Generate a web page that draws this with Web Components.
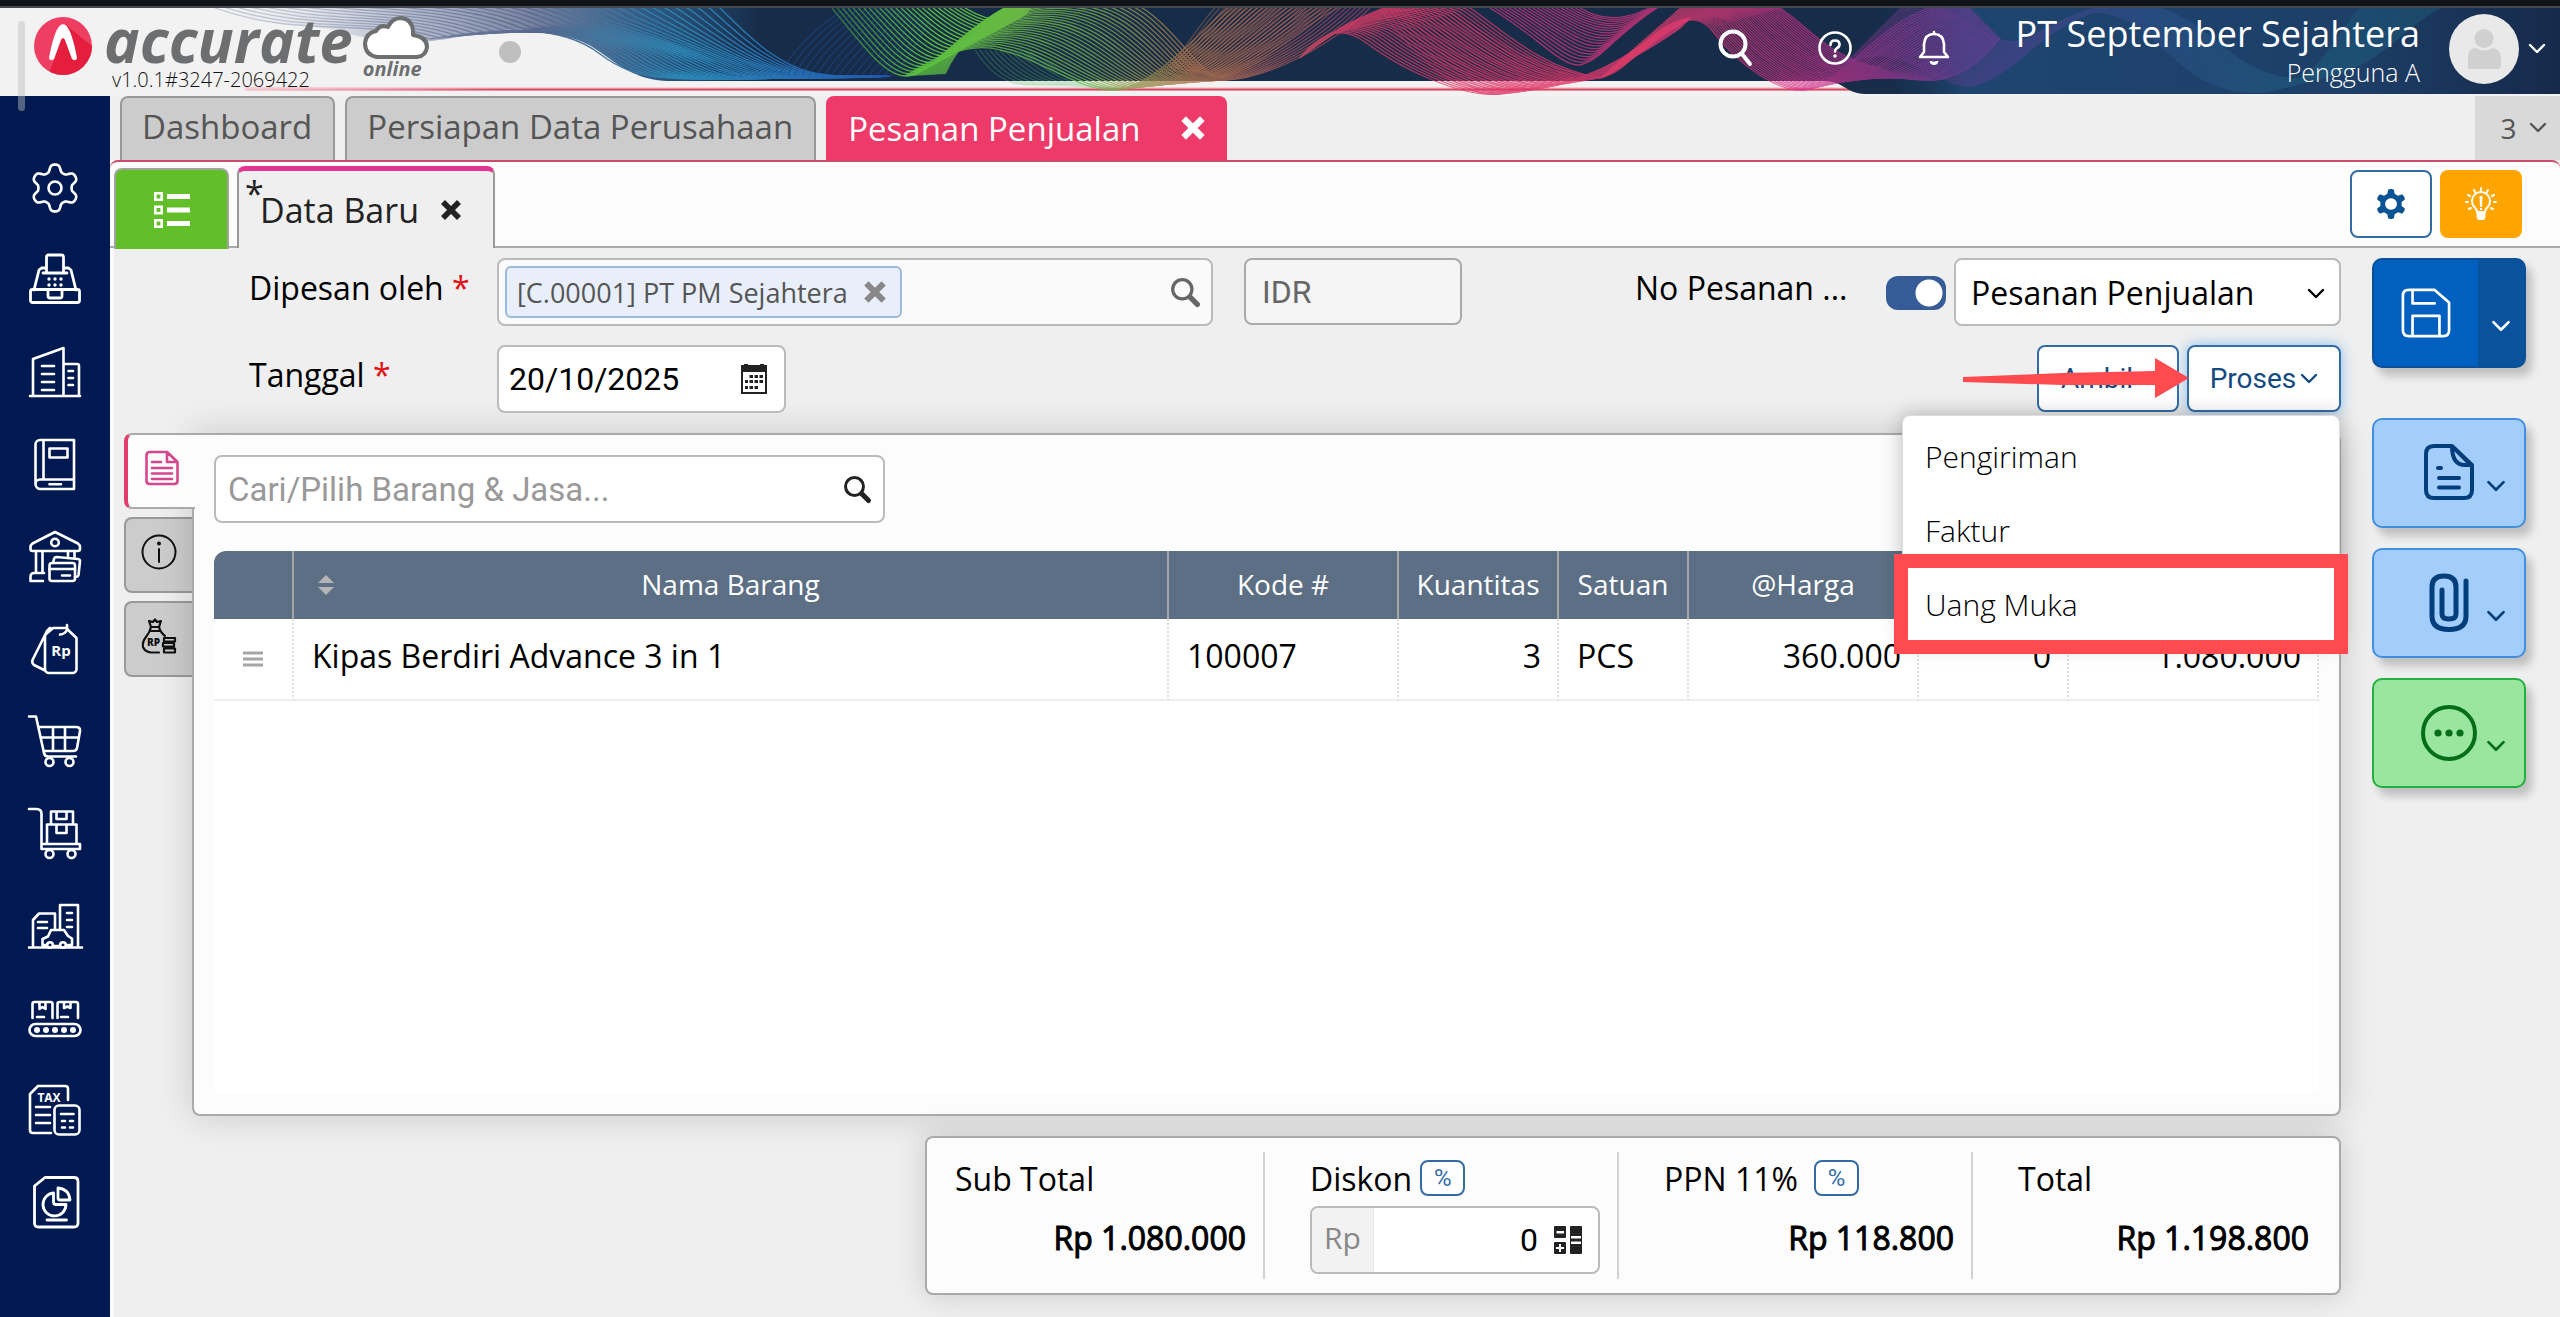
<!DOCTYPE html>
<html lang="id">
<head>
<meta charset="utf-8">
<title>Accurate Online - Pesanan Penjualan</title>
<style>
html,body{margin:0;height:100%}
body{font-family:"Open Sans","Noto Sans",sans-serif;font-size:32px;color:#000;background:#efefef;--ui:Roboto,"Noto Sans",sans-serif;--line:#aaa;--pink:#ee3a68;--blue:#0b4f96}
</style>
</head>
<body>
<accurate-app></accurate-app>
<script>
const BASE = `*{box-sizing:border-box}button,input,select{font:inherit;color:inherit;margin:0;border:0;padding:0;background:none;outline:0}button{cursor:pointer;display:flex;align-items:center;justify-content:center}`;

function define(name, css, html) {
  customElements.define(name, class extends HTMLElement {
    connectedCallback() {
      if (this.shadowRoot) return;
      const root = this.attachShadow({ mode: "open" });
      root.innerHTML = `<style>${BASE}${css}</style>${typeof html === "function" ? html(this) : html}`;
    }
  });
}

/* Six-lobed gear outline, sampled around its centre */
function gearPath(cx, cy, base, amp, sharp) {
  let d = "";
  for (let i = 0; i < 144; i++) {
    const t = i / 144 * Math.PI * 2;
    const r = base + amp * Math.tanh(sharp * Math.cos(6 * t)) / Math.tanh(sharp);
    d += (i ? "L" : "M") + (cx + r * Math.sin(t)).toFixed(2) + " " + (cy - r * Math.cos(t)).toFixed(2);
  }
  return d + "Z";
}

const S = (w) => `fill="none" stroke="currentColor" stroke-width="${w}" stroke-linecap="round" stroke-linejoin="round"`;
const ICONS = {
  gear: [54, 54, `<g ${S(2.6)}><path d="${gearPath(27, 27, 20, 3.4, 1.6)}"/><circle cx="27" cy="27" r="6.5"/></g>`],
  register: [54, 54, `<g ${S(2.8)}><path d="M15 20V20H39M18.500 20V4a2 2 0 0 1 2-2H33.500a2 2 0 0 1 2 2V20M18 15H13.500L11 17L6 37M36 15H40.500L43 17L48 37"/><rect x="2.500" y="36.500" width="49" height="13" rx="2"/><path d="M20 37V43a2 2 0 0 0 2 2H32a2 2 0 0 0 2-2V37"/></g><g fill="currentColor"><circle cx="21" cy="26" r="1.700"/><circle cx="27" cy="26" r="1.700"/><circle cx="33" cy="26" r="1.700"/><circle cx="21" cy="32" r="1.700"/><circle cx="27" cy="32" r="1.700"/><circle cx="33" cy="32" r="1.700"/></g>`],
  building: [54, 54, `<g ${S(2.6)}><path d="M2 50H52M5 50V13L35.500 2V50M35.500 18H49a2 2 0 0 1 2 2V50M14 20H26M14 28H26M14 36H26M14 44H26M40.500 25H45M40.500 32H45M40.500 39H45"/></g>`],
  book: [54, 54, `<g ${S(2.6)} stroke-linejoin="miter"><path d="M46 2H12a4.500 4.500 0 0 0-4.500 4.500V46a5 5 0 0 0 5 5H46V2ZM15.500 2V41M46 41.500H12a4.500 4.500 0 0 0-4.500 4.500M21.500 10.500H39.500V19.500H21.500ZM21.500 46.300H33"/></g>`],
  bank: [54, 54, `<g ${S(2.6)}><path d="M27 2L50 13.500Q52 15 52 17V19Q52 21 49.500 21H4.500Q2.500 21 2.500 19V17Q2.500 15 4.500 13.500Z"/><circle cx="27" cy="12.500" r="3.800"/><path d="M8 21V43M14.500 21V43M40 21V26M46.500 21V27M16 43H6a3.500 3.500 0 0 0-3.500 3.500V51H15"/><rect x="21.500" y="33" width="25.500" height="18" rx="2.500"/><path d="M21.500 39H47M34 45.500H42M25 33L26 29Q26.500 27 28.500 27L50 29Q52 29.500 52 31L50.500 45Q50 47 47 47"/></g>`],
  tag: [54, 54, `<g ${S(2.6)}><path d="M17 13L25 6H38L48.500 16V47a4 4 0 0 1-4 4H21a4 4 0 0 1-4-4ZM22 6L19 9L4.500 38Q3.500 41 6 43L17 48.500"/><path d="M32 12.500Q37 12 39 8V3"/></g><text x="33" y="34" text-anchor="middle" font-size="15" font-weight="700" fill="currentColor">Rp</text>`],
  cart: [54, 54, `<g ${S(2.6)}><path d="M1 1.500H8L16 38Q16.500 41.500 20 41.500H48M10.500 12H48Q52.500 12 52 16L49 33Q48.500 36 45 36H15.500M13 22.500H51M25 12V36M37 12V36"/><circle cx="21.500" cy="47" r="4"/><circle cx="41.500" cy="47" r="4"/></g>`],
  trolley: [54, 54, `<g ${S(2.6)}><path d="M1 2H8.500Q13.500 2 13.500 7V42H52V37H13.500M19 37V17.500H48.500V37M23 17.500V4.500H45V17.500M28.500 4.500V12H38.500V4.500M28.500 17.500V26H38.500V17.500"/><circle cx="21.500" cy="47" r="4"/><circle cx="43.500" cy="47" r="4"/></g>`],
  asset: [54, 54, `<g ${S(2.6)}><path d="M1 48.500H54M5 48V21L11 14.500H27V30M32 30V6H50V48M10 23H19M10 29H19M39 14H44M39 21H44M39 28H44M18 46H14.500V40L20 37.500L23 31H36L40 37L44 39.500V46H40"/><circle cx="22" cy="46" r="2.800"/><circle cx="35" cy="46" r="2.800"/><path d="M26 47H31"/></g>`],
  conveyor: [54, 54, `<g ${S(2.6)}><path d="M4.500 27V13Q4.500 11 6.500 11H22.500Q24.500 11 24.500 13V27M29.500 27V13Q29.500 11 31.500 11H48Q50 11 50 13V27M11.500 11V18L14.500 16L17.500 18V11M36 11V17L39.500 15.500L42.500 17V11M9 26H16M33 26H40"/><rect x="1.500" y="33" width="51" height="12" rx="6"/></g><g fill="currentColor"><circle cx="9" cy="39" r="3"/><circle cx="18" cy="39" r="3"/><circle cx="27" cy="39" r="3"/><circle cx="36" cy="39" r="3"/><circle cx="45" cy="39" r="3"/></g>`],
  tax: [54, 54, `<g ${S(2.6)}><path d="M40 16V5Q40 2 37 2H10L2 10V46Q2 49 5 49H23M8 23H22M8 31H22M8 39H22"/><rect x="26.500" y="21.500" width="25" height="29" rx="4.500"/><path d="M33 30H45.500M34 37H37M42 37H45M34 43.500H37M42 43.500H45"/></g><text x="21" y="17.500" text-anchor="middle" font-size="12" font-weight="700" fill="currentColor">TAX</text>`],
  report: [54, 54, `<g ${S(2.8)}><path d="M17 1.500H46Q50 1.500 50 5.500V47Q50 51 46 51H10.500Q6.500 51 6.500 47V10Z"/><path d="M25.500 17A11.500 11.500 0 1 0 38 28.500H28Q25.500 28.500 25.500 26Z"/><path d="M30 12Q41 13 42 24H32Q30 24 30 22ZM19 44H38.500"/></g>`],
  search: [34, 38, `<g ${S(4)}><circle cx="15" cy="15" r="12.500"/><path d="M24 25L32 35"/></g>`],
  loupe: [28, 28, `<g ${S(3)}><circle cx="11.500" cy="11.500" r="9"/><path d="M19 19L25.500 25.500" stroke-width="5"/></g>`],
  help: [34, 34, `<g ${S(2.6)}><circle cx="17" cy="17" r="15.500"/><path d="M12.500 14Q12.500 9.500 17 9.500Q21.500 9.500 21.500 13.500Q21.500 16 18.500 17.500Q17 18.500 17 20.500"/></g><circle cx="17" cy="25" r="1.800" fill="currentColor"/>`],
  bell: [32, 34, `<g ${S(2.6)}><path d="M16 1V3M2 26L6 21V13Q7 3 16 3Q25 3 26 13V21L30 26Z"/></g><path d="M11.500 30H14L16 31L18 30H20.500Q20 34 16 34Q12 34 11.500 30Z" fill="currentColor"/>`],
  chevron: [18, 12, `<path d="M2 2L9 9L16 2" ${S(2.4)}/>`],
  close: [24, 24, `<path d="M4 4L20 20M20 4L4 20" fill="none" stroke="currentColor" stroke-width="5.600"/>`],
  list: [36, 36, `<g fill="none" stroke="currentColor" stroke-width="2.600"><path d="M1.300 1.300H7.700V7.700H1.300ZM1.300 14.800H7.700V21.200H1.300ZM1.300 28.300H7.700V34.700H1.300Z"/><path d="M13 4.500H36M13 18H36M13 31.500H36" stroke-width="5"/></g>`],
  cog: [30, 30, `<path fill-rule="evenodd" fill="currentColor" d="${gearPath(15, 15, 12, 2, 3)}M15 9.500a5.500 5.500 0 1 0 .010 0Z"/>`],
  bulb: [32, 34, `<g ${S(2)}><path d="M12 25Q11.500 22 9 19.500Q7 17.500 7 14A9 9 0 0 1 25 14Q25 17.500 23 19.500Q20.500 22 20 25ZM16 1V3M9 3L10 5M23 3L22 5M3 8L5 9M29 8L27 9M1 15H3M31 15H29M4 22L6 21M28 22L26 21"/></g><path d="M11.500 26H20.500V30L19 33H13L11.500 30ZM14.500 9H17.500L17 20H15ZM15 21H17V23H15Z" fill="currentColor"/>`],
  calendar: [28, 30, `<path fill-rule="evenodd" fill="currentColor" d="M1 1H4V0H8V1H20V0H24V1H27V30H1ZM3 8V28H25V8ZM9.500 11H13V14H9.500ZM14.500 11H18V14H14.500ZM19.500 11H23V14H19.500ZM5 16H8V19H5ZM9.500 16H13V19H9.500ZM14.500 16H18V19H14.500ZM19.500 16H23V19H19.500ZM5 22H8V25H5ZM9.500 22H13V25H9.500ZM14.500 22H18V25H14.500Z"/>`],
  doc: [34, 36, `<g ${S(2.6)}><path d="M22 2H5Q1.500 2 1.500 5V31Q1.500 34 5 34H29Q32.500 34 32.500 31V12ZM22 2V12H32.500M7 12H16M7 18H27M7 23.500H27M7 29H27"/></g>`],
  info: [36, 36, `<g ${S(2)}><circle cx="18" cy="18" r="16.500"/><path d="M18 15V28"/></g><circle cx="18" cy="9.500" r="2" fill="currentColor"/>`],
  bag: [36, 36, `<g ${S(2.2)}><path d="M8 3L12 4L14 1.500L16 4L20 3L18 9H10ZM9 13H19M10 9Q9 14 5 19Q1 24 2 29Q4 34 10 34.500H18M18 9Q19 14 24 18"/><path d="M23 20H34V23.500H23ZM22 25H33V28.500H22ZM23 30.500H34V34.500H23Z"/></g><text x="12.500" y="28" text-anchor="middle" font-size="10" font-weight="800" fill="currentColor">RP</text>`],
  save: [52, 52, `<g ${S(2.8)}><path d="M8 2H35L50 15V44Q50 50 44 50H8Q2 50 2 44V8Q2 2 8 2ZM12 2V16H35M12 50V29H40V50"/></g>`],
  file: [52, 58, `<g ${S(4)}><path d="M29 2H11Q3 2 3 10V46Q3 54 11 54H41Q49 54 49 46V22ZM29 2Q29 21 42 21H49L29 2M15 24H18M16 34H36M16 43.500H36" /></g>`],
  clip: [40, 60, `<path d="M37 8V43Q37 56.500 20 56.500Q3 56.500 3 43V14Q3 3 15 3Q27 3 27 14V41Q27 46 20 46Q13 46 13 41V17" ${S(5)}/>`],
  more: [58, 58, `<circle cx="29" cy="29" r="26" ${S(4)}/><g fill="currentColor"><circle cx="18" cy="29" r="3.600"/><circle cx="29" cy="29" r="3.600"/><circle cx="40" cy="29" r="3.600"/></g>`],
  calc: [28, 28, `<path fill-rule="evenodd" fill="currentColor" d="M1 0H11Q12 0 12 1V11Q12 12 11 12H1Q0 12 0 11V1Q0 0 1 0ZM2.500 5V7.500H10V5ZM1 16H11Q12 16 12 17V27Q12 28 11 28H1Q0 28 0 27V17Q0 16 1 16ZM5 18V21H2V23H5V26H7V23H10V21H7V18ZM17 0H27Q28 0 28 1V27Q28 28 27 28H17Q16 28 16 27V1Q16 0 17 0ZM17 10V12.500H27V10ZM17 15.500V18H27V15.500Z"/>`],
  sort: [16, 20, `<path d="M8 0L16 8H0ZM0 12H16L8 20Z" fill="currentColor"/>`],
  grip: [20, 16, `<path d="M0 2H20M0 8H20M0 14H20" stroke="currentColor" stroke-width="3"/>`],
  cloud: [66, 44, `<path d="M14 41Q2 39 2 27Q3 17 13 15Q17 8 25 11Q29 2 38 2Q49 3 50 15V19Q64 21 64 31Q63 40 54 41Z" fill="#fff" stroke="#6d6e70" stroke-width="4" stroke-linejoin="round"/>`],
  logo: [58, 60, `<defs><clipPath id="c"><circle cx="29" cy="30" r="29"/></clipPath></defs><circle cx="29" cy="30" r="29" fill="#ee3f63"/><path clip-path="url(#c)" d="M32 9L60 32V60H14L20 44Z" fill="#e41e3c"/><path d="M15 42Q20 15 26 9.500Q29 7 32 9.500Q38 15 43 42Q42 46 38 43L31 24Q29 20 27 24L20 43Q16 46 15 42Z" fill="#fff"/>`],
  avatar: [70, 70, `<circle cx="35" cy="35" r="35" fill="#e9e9e9"/><circle cx="35" cy="24.500" r="9.500" fill="#d0d0d0"/><path d="M19 55V43Q19 34 27 34Q35 39 43 34Q52 35 52 43V51Q52 55 48 55Z" fill="#d0d0d0"/>`]
};

define("acc-icon", `:host{display:block;flex:none}svg{display:block;overflow:visible}text{font-family:"Open Sans",sans-serif}`, (el) => {
  const [w, h, body] = ICONS[el.getAttribute("name")];
  const width = +(el.getAttribute("width") || w);
  return `<svg width="${width}" height="${Math.round(width * h / w)}" viewBox="0 0 ${w} ${h}" aria-hidden="true">${body}</svg>`;
});

/* Header banner: ribbons made of many interpolated curves */
function ribbon(a, b, n, stroke, opacity) {
  let out = "";
  for (let i = 0; i < n; i++) {
    const t = i / (n - 1);
    const p = a.map((v, k) => (v + (b[k] - v) * t).toFixed(1));
    let d = `M${p[0]} ${p[1]}`;
    for (let k = 2; k < p.length; k += 6) d += `C${p.slice(k, k + 6).join(" ")}`;
    out += `<path d="${d}"/>`;
  }
  return `<g fill="none" stroke="${stroke}" stroke-width="1.300" opacity="${opacity}">${out}</g>`;
}
function grad(id, x1, x2, stops) {
  return `<linearGradient id="${id}" gradientUnits="userSpaceOnUse" x1="${x1}" x2="${x2}" y1="0" y2="0">${stops.map(([o, c, a = 1]) => `<stop offset="${o}" stop-color="${c}" stop-opacity="${a}"/>`).join("")}</linearGradient>`;
}
define("wave-banner", `:host{display:block}svg{display:block;width:100%;height:100%}`, () => `
<svg viewBox="0 0 2560 88" preserveAspectRatio="none" aria-hidden="true"><defs>
${grad("n", 215, 760, [[0, "#f2f2f2", 0], [.3, "#b9bed0", .8], [.6, "#707c9b"], [.8, "#2d5a85"], [1, "#162c48"]])}
${grad("r", 1860, 2560, [[0, "#162c48", 0], [.15, "#1e4570"], [.7, "#1d3f68"], [1, "#16294a"]])}
${grad("b", 300, 890, [[0, "#8e98b5", .5], [.4, "#56678c"], [.65, "#2a87b5"], [1, "#2358b0"]])}
${grad("g1", 820, 1030, [[0, "#2f6a44"], [.5, "#5cc23f"], [1, "#6bc43e"]])}
${grad("g2", 920, 1340, [[0, "#5bc23f"], [.4, "#77b04c"], [.65, "#b0734e"], [1, "#93405f"]])}
${grad("p", 1200, 1700, [[0, "#b06a50"], [.3, "#e43c66"], [.7, "#dd3668"], [1, "#e23a78"]])}
${grad("m", 1640, 1960, [[0, "#e83d68"], [.5, "#d8308a"], [1, "#7a3b9b"]])}
${grad("v", 1800, 2300, [[0, "#9c348f"], [.4, "#6b3f9c"], [.7, "#35599b"], [1, "#1f6a86"]])}
${grad("l", 240, 500, [[0, "#e2506f", 0], [1, "#d84c66"]])}
</defs>
<path d="M245 81H1860" stroke="#f7b9c4" stroke-width="4" opacity=".6"/><path d="M240 81.500H1860" stroke="url(#l)" stroke-width="2"/>
<path d="M215 0C250 22 290 10 340 24C420 44 450 28 490 24C540 16 575 26 600 44C625 62 640 72 668 73H1825C1845 74 1845 85 1865 86H2560V0Z" fill="url(#n)"/>
<path d="M1860 0H2560V86H1900Z" fill="url(#r)"/>
${ribbon([215,0,300,30,360,10,430,31,500,20,560,15,600,46,640,76,670,73,830,68], [400,-60,520,-60,650,-50,720,0,750,30,780,60,820,66,850,70,870,70,890,68], 32, "url(#b)", 1)}
${ribbon([780,66,800,30,830,10,860,-10], [890,69,900,60,910,50,930,10], 16, "#1f4c96", .5)}
${ribbon([832,0,865,40,885,68,906,68,935,68,960,10,1050,-20], [965,0,985,12,1000,14,1012,12,1025,10,1030,4,1040,-20], 26, "url(#g1)", .95)}
${ribbon([905,68,950,40,980,36,1000,42,1040,50,1080,84,1115,82,1160,78,1210,10,1240,-10], [945,66,970,10,1040,-20,1100,-14,1160,-10,1185,50,1215,70,1250,80,1330,40,1370,0], 30, "url(#g2)", .8)}
${ribbon([975,42,1000,80,1020,80,1070,74], [1030,44,1060,60,1080,80,1120,82], 12, "#5bc26a", .3)}
${ribbon([1170,60,1200,20,1220,-20,1260,-30], [1220,70,1270,60,1310,0,1370,-10], 22, "#b0704f", .45)}
${ribbon([1300,50,1325,20,1345,20,1365,34,1400,60,1460,90,1500,86,1560,80,1610,70,1680,20], [1340,20,1380,0,1420,-20,1470,0,1500,20,1540,60,1600,70,1640,60,1640,20,1690,10], 30, "url(#p)", .75)}
${ribbon([1380,0,1420,60,1470,90,1500,86], [1450,0,1500,40,1540,60,1600,70], 16, "#e03a68", .4)}
${ribbon([1490,0,1540,30,1560,58,1580,57,1610,50,1620,10,1690,-20], [1580,0,1600,12,1620,12,1640,4,1650,0,1670,-10,1700,-20], 20, "#d4357c", .75)}
${ribbon([1600,70,1650,50,1680,-10,1710,20,1740,60,1780,84,1804,82,1850,76,1870,10,1960,-10], [1680,0,1700,-10,1740,-10,1780,0,1810,20,1830,50,1880,60,1920,80,1960,80,2000,30], 34, "url(#m)", .7)}
${ribbon([1840,60,1900,20,1940,90,1980,76,2040,50,2050,0,2100,4,2160,10,2180,90,2260,84,2320,80,2340,20,2360,0], [1900,0,1960,-20,1980,50,2030,30,2080,0,2110,-10,2160,0,2220,20,2240,80,2320,70,2380,60,2400,20,2440,0], 34, "url(#v)", .4)}
</svg>`);

define("app-header", `
:host{display:block;position:relative;height:96px;background:#f2f2f2;border-top:6px solid #121318;color:#fff}
:host::before{content:"";display:block;height:2px;background:#45454f}
wave-banner{position:absolute;left:0;right:0;top:2px;height:88px}
.bar{position:relative;display:flex;height:88px;align-items:center;padding:0 14px 0 34px}
.scroll{position:absolute;left:18px;top:15px;width:7px;height:90px;border-radius:4px;background:rgba(190,190,195,.45);z-index:2}
.brand{display:flex;align-self:flex-start;color:#6d6e70;text-decoration:none}
.brand acc-icon{margin-top:8px}
.word{margin-left:12px}
.name{font-size:60px;line-height:64px;font-weight:700;font-style:italic}
.ver{font-size:20px;line-height:16px;font-weight:300;color:#111;padding-left:8px}
.on{margin-left:10px;font-size:20px;line-height:18px;font-weight:700;font-style:italic}
.dot{width:22px;height:22px;border-radius:50%;background:#bfbfbf;margin-left:70px}
.grow{flex:1}
.tools{display:flex;gap:66px;margin-right:62px;padding-bottom:8px;align-items:center}
.who{text-align:right;min-width:408px;align-self:flex-start}
.co{font-size:36px;line-height:52px}.us{font-size:25px;line-height:24px;font-weight:300}
.me{margin-left:29px;gap:9px;padding-bottom:6px}`, `
<wave-banner></wave-banner><div class="scroll"></div>
<div class="bar"><a class="brand" href="#"><acc-icon name="logo"></acc-icon><div class="word"><div class="name">accurate</div><div class="ver">v1.0.1#3247-2069422</div></div>
<div class="on"><acc-icon name="cloud"></acc-icon>online</div></a><span class="dot"></span><span class="grow"></span>
<div class="tools"><button aria-label="Cari"><acc-icon name="search"></acc-icon></button><button aria-label="Bantuan"><acc-icon name="help"></acc-icon></button><button aria-label="Notifikasi"><acc-icon name="bell"></acc-icon></button></div>
<div class="who"><div class="co">PT September Sejahtera</div><div class="us">Pengguna A</div></div>
<button class="me" aria-label="Profil"><acc-icon name="avatar"></acc-icon><acc-icon name="chevron" width="18"></acc-icon></button></div>`);

define("app-sidebar", `:host{display:flex;width:110px;flex:none;background:#001a51;color:#fff}
nav{display:flex;flex-direction:column;flex:1;padding:46px 0 68px}a{flex:1;display:flex;align-items:center;justify-content:center;color:inherit}`,
  () => `<nav aria-label="Menu utama">${["gear", "register", "building", "book", "bank", "tag", "cart", "trolley", "asset", "conveyor", "tax", "report"].map((n) => `<a href="#" aria-label="${n}"><acc-icon name="${n}"></acc-icon></a>`).join("")}</nav>`);

define("nav-tabs", `
:host{display:flex;height:64px;gap:10px;padding-left:6px;font-size:33px;color:#555}
button{height:64px;padding:0 21px 6px 20px;background:#ccc;border:2px solid #999;border-bottom:0;border-radius:8px 8px 0 0;white-space:nowrap}
.on{background:var(--pink);border-color:var(--pink);color:#fff;gap:39px;padding:0 18px 2px 20px}
.n{margin-left:auto;width:85px;border:0;border-radius:0;background:#d9d9d9;font-size:28px;gap:12px;padding:0;padding-left:12px}`, `
<button>Dashboard</button><button>Persiapan Data Perusahaan</button><button class="on">Pesanan Penjualan<acc-icon name="close" width="28"></acc-icon></button>
<button class="n">3<acc-icon name="chevron" width="18"></acc-icon></button>`);

define("doc-tabs", `
:host{display:flex;height:88px;background:#fcfcfc;border-top:2px solid #cc4a6c;border-radius:8px 8px 0 0;box-shadow:inset 0 -2px #aaa;padding-right:34px}
.list{width:115px;height:81px;margin-top:6px;background:#62bf29;color:#fff;border:2px solid #a0a59c;border-bottom:0;border-radius:8px 8px 0 0}
.doc{margin:4px 0 0 8px;width:258px;height:82px;background:#efefef;border:2px solid #999;border-top:5px solid #e3358f;border-bottom:0;border-radius:8px 8px 0 0;font-size:34px;color:#222;justify-content:flex-start;padding-left:6px}
.star{align-self:flex-start;line-height:44px;width:15px}
.doc acc-icon{margin-left:20px}
.tools{margin:8px 4px 0 auto;display:flex;gap:8px}
.tools button{width:82px;height:68px;border-radius:8px}
.cog{background:#fff;border:2px solid #336ca5;color:#0b5394}.tip{background:#ffa500;color:#fff}`, `
<button class="list" aria-label="Daftar"><acc-icon name="list"></acc-icon></button>
<button class="doc"><span class="star">*</span>Data Baru<acc-icon name="close" width="24"></acc-icon></button>
<div class="tools"><button class="cog" aria-label="Pengaturan"><acc-icon name="cog" width="32"></acc-icon></button><button class="tip" aria-label="Tips"><acc-icon name="bulb"></acc-icon></button></div>`);

define("process-menu", `
:host{position:absolute;top:70px;right:1px;width:438px;z-index:5;background:#fff;border:1px solid #ddd;border-radius:8px;box-shadow:0 0 20px rgba(0,0,0,.25);padding:3px 0}
button{position:relative;width:100%;height:74px;justify-content:flex-start;padding:0 0 0 22px;font-family:"Open Sans",sans-serif;font-size:30px;font-weight:300;color:#000}
.mark::after{content:"";position:absolute;inset:-13px -9px;border:14px solid #ff4b4f}`, `
<button>Pengiriman</button><button>Faktur</button><button class="mark">Uang Muka</button>`);

define("order-form", `
:host{display:block;margin-left:135px;padding-top:10px}
.row{display:flex;height:68px}.row>*{flex:none}.row+.row{margin-top:19px}
.l{width:248px;line-height:60px}.l i{font-style:normal;color:#e01010}
.box{display:flex;align-items:center;border:2px solid #bbb;border-radius:8px;background:#fff;height:68px}
.row>.cust{flex:1;min-width:0;background:#fafafa;padding:0 11px 0 6px;color:#666}
.cust input{flex:1;min-width:0}
.chip{display:flex;align-items:center;gap:14px;height:52px;padding:0 12px 0 10px;border:2px solid #98bbe2;border-radius:6px;background:#e8effa;color:#555;font-size:27px;white-space:nowrap}
.chip button{color:#888}
.cur{width:218px;height:67px;margin-left:31px;background:#f5f5f5;border-color:#aaa;color:#666;padding:0 16px;font-family:var(--ui)}
.no{width:251px;margin-left:173px;line-height:60px;white-space:nowrap}
.sw{appearance:none;width:60px;height:34px;margin:18px 8px 0 0;border-radius:12px;background:radial-gradient(circle at 43px 17px,#fff 13px,#355c96 14px)}
.sel{position:relative;width:387px}.sel select{appearance:none;width:100%;height:64px;padding-left:15px}
.sel acc-icon{position:absolute;right:14px;top:28px;pointer-events:none}
.date{width:289px;padding:0 16px 0 10px;font-family:var(--ui);color:#000}.date input{flex:1;min-width:0}.date button{color:#222}
.acts{position:relative;display:flex;gap:8px;margin-left:auto}
.acts>button{height:67px;border:2px solid #336ca5;border-radius:8px;background:#fff;color:#144a80;font-family:var(--ui);font-size:28px;gap:4px}
.a{width:142px}.p{width:154px;box-shadow:0 0 14px rgba(90,170,240,.7)}
.arrow{position:absolute;right:152px;top:13px;z-index:6}`, `
<div class="row"><label class="l" for="cust">Dipesan oleh <i>*</i></label>
<div class="box cust"><span class="chip">[C.00001] PT PM Sejahtera<button aria-label="Hapus"><acc-icon name="close" width="26"></acc-icon></button></span><input id="cust"><acc-icon name="loupe" width="30"></acc-icon></div>
<input class="box cur" value="IDR" readonly aria-label="Mata uang">
<label class="no" for="auto">No Pesanan ...</label><input class="sw" type="checkbox" role="switch" id="auto" checked>
<div class="box sel"><select aria-label="Penomoran"><option>Pesanan Penjualan</option></select><acc-icon name="chevron" width="18"></acc-icon></div></div>
<div class="row"><label class="l" for="date">Tanggal <i>*</i></label>
<div class="box date"><input id="date" value="20/10/2025"><button aria-label="Kalender"><acc-icon name="calendar"></acc-icon></button></div>
<div class="acts"><button class="a">Ambil<acc-icon name="chevron" width="18"></acc-icon></button><button class="p">Proses<acc-icon name="chevron" width="18"></acc-icon></button>
<svg class="arrow" width="226" height="40" viewBox="0 0 226 40" aria-hidden="true"><path d="M0 19L100 15L192 13V0L226 20L192 40V27H100L0 24Z" fill="#ff4b4f"/></svg>
<process-menu></process-menu></div></div>`);

define("side-tabs", `
:host{display:flex;flex-direction:column;gap:8px;width:69px;flex:none;margin:0 -1px 0 10px}
button{height:76px;border:2px solid #999;border-right:0;border-radius:8px 0 0 8px;background:#ccc;color:#111;padding-bottom:6px;padding-right:2px}
.on{position:relative;z-index:2;width:71px;background:#fcfcfc;border-color:#aaa;border-left:4px solid #e03d6c;color:#d4468e;padding-right:0}`, `
<button class="on" aria-label="Rincian"><acc-icon name="doc"></acc-icon></button><button aria-label="Info"><acc-icon name="info"></acc-icon></button><button aria-label="Biaya"><acc-icon name="bag"></acc-icon></button>`);

define("item-panel", `
:host{display:flex;flex-direction:column;flex:1;background:#fcfcfc;border:2px solid var(--line);border-radius:0 8px 8px 8px;padding:20px 20px 22px;box-shadow:0 0 36px rgba(0,0,0,.16)}
.search{display:flex;align-items:center;width:671px;height:68px;border:2px solid #bbb;border-radius:8px;background:#fff;padding:0 12px;color:#222;font-family:var(--ui);font-size:33px}
.search input{flex:1;min-width:0}.search input::placeholder{color:#999;opacity:1}
.grid{flex:1;margin-top:28px;background:#fff;border-radius:12px 12px 0 0;overflow:hidden}
table{width:100%;table-layout:fixed;border-collapse:separate;border-spacing:0}
th{height:68px;padding:0 0 2px;font-size:28px;font-weight:400;color:#fff;background:#5c6f84;border-right:2px solid #a6a6a6}
th:last-child{border-right-color:transparent}
td{height:82px;padding:0 16px 8px 18px;border-right:2px dotted #ddd;border-bottom:2px solid #eee;white-space:nowrap}
.r{text-align:right}.h{position:relative}.h acc-icon{position:absolute;left:24px;top:24px;color:#b5b5b5}
.g{padding:0 0 0 29px;color:#a5a5a5}
.c1{width:80px}.c3{width:230px}.c4{width:160px}.c5{width:130px}.c6{width:230px}.c7{width:150px}.c8{width:250px}`, `
<div class="search"><input placeholder="Cari/Pilih Barang &amp; Jasa..." aria-label="Cari/Pilih Barang &amp; Jasa"><acc-icon name="loupe"></acc-icon></div>
<div class="grid"><table><colgroup><col class="c1"><col><col class="c3"><col class="c4"><col class="c5"><col class="c6"><col class="c7"><col class="c8"></colgroup>
<thead><tr><th></th><th class="h"><acc-icon name="sort"></acc-icon>Nama Barang</th><th>Kode #</th><th>Kuantitas</th><th>Satuan</th><th>@Harga</th><th></th><th></th></tr></thead>
<tbody><tr><td class="g"><acc-icon name="grip"></acc-icon></td><td>Kipas Berdiri Advance 3 in 1</td><td>100007</td><td class="r">3</td><td>PCS</td><td class="r">360.000</td><td class="r">0</td><td class="r">1.080.000</td></tr></tbody></table></div>`);

define("total-cell", `
:host{display:block;padding:0 17px 0 45px;border-right:2px solid #d2d2d2}
:host(:first-of-type){padding-left:28px}:host(:last-of-type){padding-right:30px;border-right:0}
.t{display:flex;align-items:center;height:52px}
.v{text-align:right;line-height:68px;-webkit-text-stroke:1px #000}`,
  (el) => `<div class="t"><span>${el.getAttribute("label")}</span><slot name="tool"></slot></div>${el.hasAttribute("value") ? `<div class="v">${el.getAttribute("value")}</div>` : "<slot></slot>"}`);

define("percent-button", `:host{display:block;margin-left:8px}:host([wide]){margin-left:16px}
button{width:45px;height:36px;border:2px solid #336ca5;border-radius:8px;background:#fff;color:#336ca5;font-family:var(--ui);font-size:24px}`, `<button>%</button>`);

define("money-field", `:host{display:flex;width:290px;height:68px;margin-top:2px;border:2px solid #bbb;border-radius:8px;background:#fff;overflow:hidden;font-family:var(--ui)}
label{width:62px;background:#f2f2f2;color:#888;line-height:60px;text-align:center;border-right:1px solid #e5e5e5;font-size:30px;font-family:"Open Sans",sans-serif}
input{flex:1;min-width:0;text-align:right}button{margin:0 16px;color:#222}`, `<label for="d">Rp</label><input id="d" value="0"><button aria-label="Kalkulator"><acc-icon name="calc"></acc-icon></button>`);

define("totals-bar", `:host{display:grid;grid-template-columns:338px 354px 354px 1fr;width:1416px;height:159px;margin:20px 0 22px auto;padding:14px 0;background:#fcfcfc;border:2px solid var(--line);border-radius:8px;box-shadow:0 0 30px rgba(0,0,0,.16)}`, `
<total-cell label="Sub Total" value="Rp 1.080.000"></total-cell>
<total-cell label="Diskon"><percent-button slot="tool"></percent-button><money-field></money-field></total-cell>
<total-cell label="PPN 11%" value="Rp 118.800"><percent-button wide slot="tool"></percent-button></total-cell>
<total-cell label="Total" value="Rp 1.198.800"></total-cell>`);

define("action-rail", `
:host{display:flex;flex-direction:column;gap:20px;width:154px;flex:none;padding-top:10px}
button{height:110px;border-radius:10px;box-shadow:6px 8px 8px rgba(0,0,0,.2)}
.save{background:#005fbf;border:2px solid #0b4f96;color:#fff;margin-bottom:30px;justify-content:flex-start;overflow:hidden}
.save>acc-icon{margin:0 27px}.drop{display:flex;align-items:center;justify-content:center;align-self:stretch;flex:1;background:#0b529c;padding-top:26px}
.b{background:#a3cefb;border:2px solid #418fe0;color:#033e7c}.g{background:#9ae6a0;border:2px solid #22b13e;color:#036e17}
.b,.g{justify-content:flex-end;gap:8px;padding-right:18px}
.b>:last-child,.g>:last-child{margin-top:26px}
.m{width:58px;display:flex;justify-content:center}`, `
<button class="save" aria-label="Simpan"><acc-icon name="save" width="50"></acc-icon><span class="drop"><acc-icon name="chevron" width="20"></acc-icon></span></button>
<button class="b" aria-label="Dokumen"><span class="m"><acc-icon name="file"></acc-icon></span><acc-icon name="chevron" width="20"></acc-icon></button>
<button class="b" aria-label="Lampiran"><span class="m"><acc-icon name="clip"></acc-icon></span><acc-icon name="chevron" width="20"></acc-icon></button>
<button class="g" aria-label="Lainnya"><span class="m"><acc-icon name="more"></acc-icon></span><acc-icon name="chevron" width="20"></acc-icon></button>`);

define("accurate-app", `
:host{display:flex;flex-direction:column;min-height:100vh}
.body{display:flex;flex:1}
main{flex:1;min-width:0;display:flex;flex-direction:column;background:#efefef;border-left:4px solid #fbfbfb}
nav-tabs{margin-left:-4px;padding-left:10px;background:#efefef}doc-tabs{margin-left:-4px;padding-left:4px}
.work{display:flex;flex:1;gap:31px;padding-right:34px}
.left{flex:1;min-width:0;display:flex;flex-direction:column}
order-form{position:relative;z-index:3}
.detail{display:flex;flex:1;margin-top:20px}`, `
<app-header></app-header><div class="body"><app-sidebar></app-sidebar><main><nav-tabs></nav-tabs><doc-tabs></doc-tabs>
<div class="work"><div class="left"><order-form></order-form><div class="detail"><side-tabs></side-tabs><item-panel></item-panel></div><totals-bar></totals-bar></div><action-rail></action-rail></div></main></div>`);
</script>
</body>
</html>
